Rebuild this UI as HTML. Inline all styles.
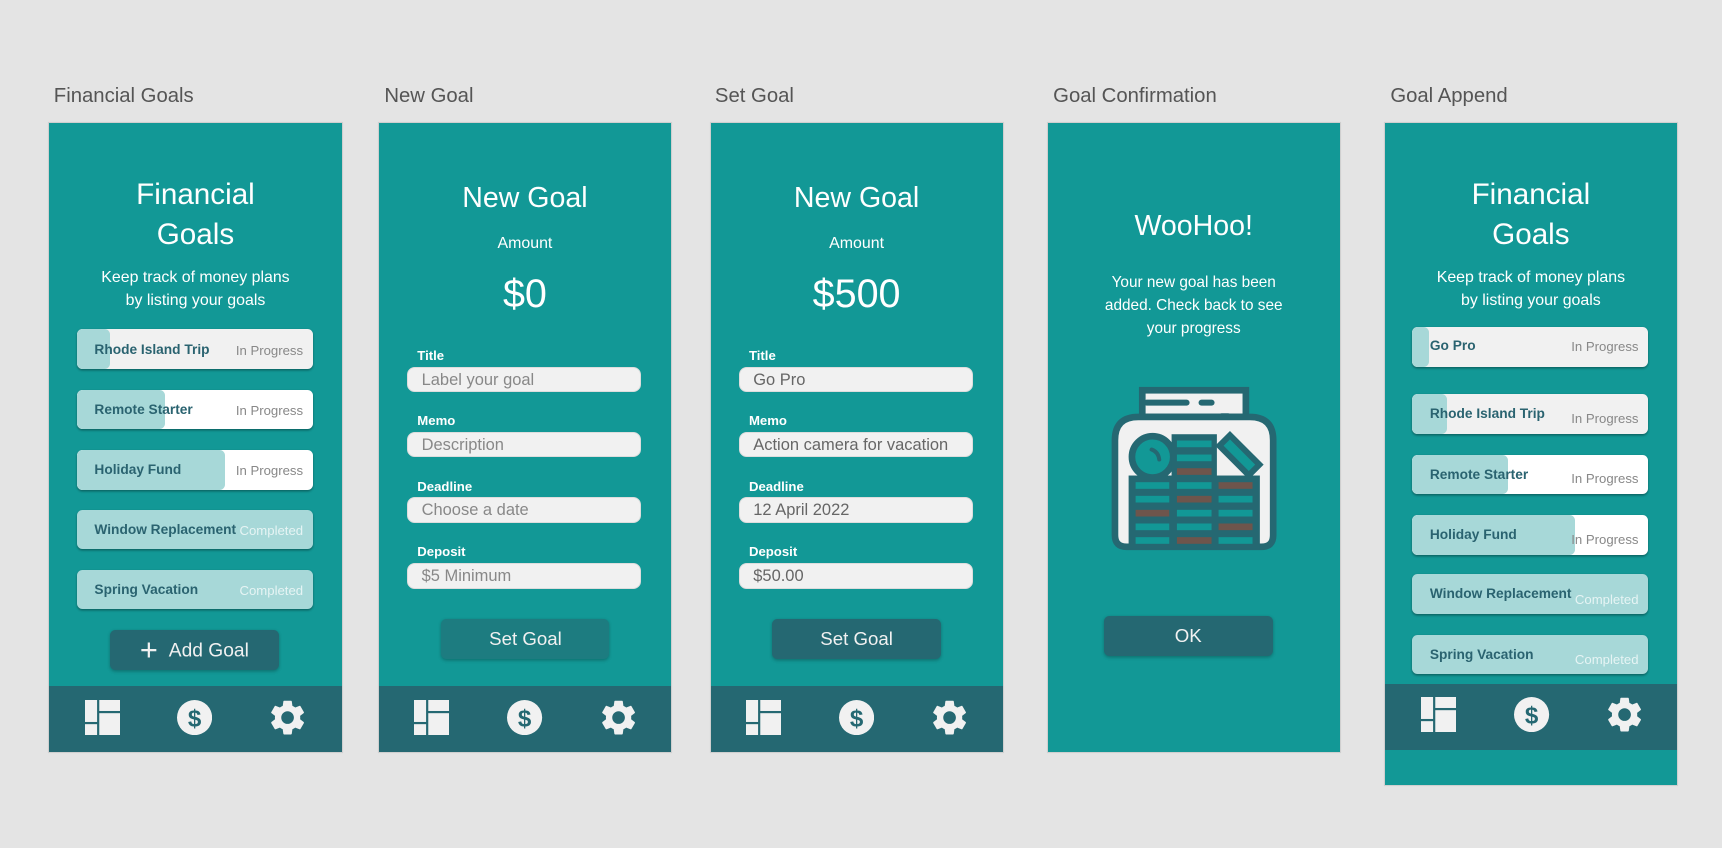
<!DOCTYPE html>
<html><head><meta charset="utf-8">
<style>
html,body{margin:0;padding:0;background:#e4e4e4;width:1722px;height:848px;overflow:hidden;font-family:"Liberation Sans",sans-serif}
#w{position:absolute;left:0;top:0;width:1568px;height:772px;zoom:1.0982}
.lbl{position:absolute;top:77px;font-size:18.5px;color:#555}
.p{position:absolute;top:112px;width:266px;height:573px;background:#129896;box-shadow:0 0 0 1px #cfcfcf;overflow:hidden}
.t{position:absolute;left:0;right:0;text-align:center;color:#fff}
.nav{position:absolute;left:0;right:0;bottom:0;height:60px;background:#256872}
.nav svg{position:absolute;top:12px;width:32px;height:32px}
.card{position:absolute;left:25px;width:215px;height:36px;border-radius:5px;background:#f1f1f1;overflow:hidden;box-shadow:0 1px 2px rgba(0,0,0,.35)}
.card .bar{position:absolute;left:0;top:0;bottom:0;background:#a7d8d8;border-radius:5px}
.card .n{position:absolute;left:16px;top:11px;font-size:12.5px;font-weight:bold;color:#2a6370}
.card .s{position:absolute;right:9px;top:12px;font-size:12px;color:#888}
.card.c .s{color:#e6f4f4}
.fl{position:absolute;left:35px;font-size:12px;font-weight:bold;color:#fff}
.in{position:absolute;left:26px;width:213px;height:23px;border-radius:7px;background:#f1f1f1;border:1px solid #ddd;font-size:15px;color:#888;line-height:22px;padding-left:12px;box-sizing:border-box}
.in.v{color:#666}
.btn{position:absolute;height:36px;border-radius:5px;color:#f1f1f1;text-align:center;font-size:17px;line-height:36px;box-shadow:0 1px 3px rgba(0,0,0,.25)}
</style></head><body><div id="w">

<div class="lbl" style="left:49px">Financial Goals</div>
<div class="lbl" style="left:350px">New Goal</div>
<div class="lbl" style="left:651px">Set Goal</div>
<div class="lbl" style="left:959px">Goal Confirmation</div>
<div class="lbl" style="left:1266px">Goal Append</div>

<svg width="0" height="0" style="position:absolute">
<defs>
<g id="dash"><rect x="0" y="0" width="11" height="20" fill="#f1f1f1"/><rect x="0" y="22" width="11" height="10" fill="#f1f1f1"/><rect x="13" y="0" width="19" height="10" fill="#f1f1f1"/><rect x="13" y="12" width="19" height="20" fill="#f1f1f1"/></g>
<g id="dol"><circle cx="16" cy="16" r="16" fill="#f1f1f1"/><text x="16" y="24" text-anchor="middle" font-family="Liberation Sans" font-weight="bold" font-size="22" fill="#256872">$</text></g>
<g id="gear"><path transform="translate(-3.2 -3.2) scale(1.6)" fill="#f1f1f1" fill-rule="evenodd" d="M19.14 12.94c.04-.3.06-.61.06-.94 0-.32-.02-.64-.07-.94l2.030-1.58a.49.49 0 00.12-.61l-1.92-3.32a.488.488 0 00-.59-.22l-2.39.96c-.5-.38-1.03-.7-1.62-.94l-.36-2.54a.484.484 0 00-.48-.41h-3.84c-.24 0-.43.17-.47.41l-.36 2.54c-.59.24-1.13.57-1.62.94l-2.39-.96c-.22-.08-.47 0-.59.22L2.74 8.87c-.12.21-.08.47.12.61l2.03 1.58c-.05.3-.09.63-.09.94s.02.64.07.94l-2.03 1.58a.49.49 0 00-.12.61l1.92 3.32c.12.22.37.29.59.22l2.39-.96c.5.38 1.03.7 1.62.94l.36 2.54c.05.24.24.41.48.41h3.84c.24 0 .44-.17.47-.41l.36-2.54c.59-.24 1.13-.56 1.62-.94l2.39.96c.22.08.47 0 .59-.22l1.92-3.32c.12-.22.07-.47-.12-.61l-2.01-1.58zM12 15.6c-1.98 0-3.6-1.62-3.6-3.6s1.62-3.6 3.6-3.6 3.6 1.62 3.6 3.6-1.62 3.6-3.6 3.6z"/></g>
</defs></svg>

<!-- Panel 1 -->
<div class="p" style="left:45px">
 <div class="t" style="top:47px;font-size:27px;line-height:37px">Financial<br>Goals</div>
 <div class="t" style="top:130px;font-size:14.5px;line-height:21px">Keep track of money plans<br>by listing your goals</div>
 <div class="card" style="top:188px"><div class="bar" style="width:30px"></div><div class="n">Rhode Island Trip</div><div class="s">In Progress</div></div>
 <div class="card" style="top:243px;background:#fff"><div class="bar" style="width:80px"></div><div class="n">Remote Starter</div><div class="s">In Progress</div></div>
 <div class="card" style="top:298px;background:#fff"><div class="bar" style="width:135px"></div><div class="n">Holiday Fund</div><div class="s">In Progress</div></div>
 <div class="card c" style="top:352px;background:#a7d8d8"><div class="n">Window Replacement</div><div class="s">Completed</div></div>
 <div class="card c" style="top:407px;background:#a7d8d8"><div class="n">Spring Vacation</div><div class="s">Completed</div></div>
 <div class="btn" style="left:55px;top:462px;width:154px;background:#256872;font-size:17.5px"><span style="font-size:28px;font-weight:300;vertical-align:-3px;margin-right:10px">+</span>Add Goal</div>
 <div class="nav"><svg style="left:32px" viewBox="0 0 32 32"><use href="#dash"/></svg><svg style="left:116px" viewBox="0 0 32 32"><use href="#dol"/></svg><svg style="left:201px" viewBox="0 0 32 32"><use href="#gear"/></svg></div>
</div>

<!-- Panel 2 -->
<div class="p" style="left:345px">
 <div class="t" style="top:54px;font-size:26px">New Goal</div>
 <div class="t" style="top:102px;font-size:14.5px">Amount</div>
 <div class="t" style="top:136px;font-size:36px">$0</div>
 <div class="fl" style="top:205px">Title</div><div class="in" style="top:222px">Label your goal</div>
 <div class="fl" style="top:264px">Memo</div><div class="in" style="top:281px">Description</div>
 <div class="fl" style="top:324px">Deadline</div><div class="in" style="top:341px">Choose a date</div>
 <div class="fl" style="top:383px">Deposit</div><div class="in" style="top:401px">$5 Minimum</div>
 <div class="btn" style="left:57px;top:452px;width:153px;background:#1d7c80">Set Goal</div>
 <div class="nav"><svg style="left:32px" viewBox="0 0 32 32"><use href="#dash"/></svg><svg style="left:117px" viewBox="0 0 32 32"><use href="#dol"/></svg><svg style="left:202px" viewBox="0 0 32 32"><use href="#gear"/></svg></div>
</div>

<!-- Panel 3 -->
<div class="p" style="left:647px">
 <div class="t" style="top:54px;font-size:26px">New Goal</div>
 <div class="t" style="top:102px;font-size:14.5px">Amount</div>
 <div class="t" style="top:136px;font-size:36px">$500</div>
 <div class="fl" style="top:205px">Title</div><div class="in v" style="top:222px">Go Pro</div>
 <div class="fl" style="top:264px">Memo</div><div class="in v" style="top:281px">Action camera for vacation</div>
 <div class="fl" style="top:324px">Deadline</div><div class="in v" style="top:341px">12 April 2022</div>
 <div class="fl" style="top:383px">Deposit</div><div class="in v" style="top:401px">$50.00</div>
 <div class="btn" style="left:56px;top:452px;width:154px;background:#256872">Set Goal</div>
 <div class="nav"><svg style="left:32px" viewBox="0 0 32 32"><use href="#dash"/></svg><svg style="left:117px" viewBox="0 0 32 32"><use href="#dol"/></svg><svg style="left:202px" viewBox="0 0 32 32"><use href="#gear"/></svg></div>
</div>

<!-- Panel 4 -->
<div class="p" style="left:954px">
 <div class="t" style="top:79px;font-size:26px">WooHoo!</div>
 <div class="t" style="top:135px;font-size:14px;line-height:21px">Your new goal has been<br>added. Check back to see<br>your progress</div>
 <svg style="position:absolute;left:2px;top:216px;width:273px;height:228px" viewBox="0 0 900 750">
  <rect x="277" y="90" width="311" height="80" fill="#f1f1f1" stroke="#256872" stroke-width="20"/>
  <path d="M265 170 H600 Q670 170 670 240 V525 Q670 560 635 560 H230 Q195 560 195 525 V240 Q195 170 265 170 Z" fill="#f1f1f1" stroke="#256872" stroke-width="20"/>
  <g stroke="#256872" stroke-width="18" stroke-linecap="round"><line x1="290" y1="127" x2="410" y2="127"/><line x1="455" y1="127" x2="485" y2="127"/><line x1="515" y1="168" x2="535" y2="168"/></g>
  <circle cx="308" cy="290" r="62" fill="#129896" stroke="#256872" stroke-width="20"/>
  <path d="M305 268 Q325 275 328 298" stroke="#256872" stroke-width="12" fill="none" stroke-linecap="round"/>
  <g transform="rotate(45 565 285)"><rect x="505" y="260" width="125" height="45" fill="#129896" stroke="#256872" stroke-width="18"/></g>
  <rect x="365" y="222" width="136" height="135" fill="#256872"/>
  <rect x="381" y="241" width="104" height="20" fill="#129896"/>
  <rect x="381" y="283" width="104" height="20" fill="#129896"/>
  <rect x="381" y="324" width="104" height="20" fill="#6e554c"/>
  <rect x="236" y="346" width="394" height="218" fill="#256872"/>
  <g>
   <rect x="257" y="366" width="101" height="20" fill="#129896"/><rect x="381" y="366" width="104" height="20" fill="#129896"/><rect x="506" y="366" width="102" height="20" fill="#6e554c"/>
   <rect x="257" y="407" width="101" height="20" fill="#129896"/><rect x="381" y="407" width="104" height="20" fill="#6e554c"/><rect x="506" y="407" width="102" height="20" fill="#129896"/>
   <rect x="257" y="449" width="101" height="20" fill="#6e554c"/><rect x="381" y="449" width="104" height="20" fill="#129896"/><rect x="506" y="449" width="102" height="20" fill="#129896"/>
   <rect x="257" y="490" width="101" height="20" fill="#129896"/><rect x="381" y="490" width="104" height="20" fill="#129896"/><rect x="506" y="490" width="102" height="20" fill="#6e554c"/>
   <rect x="257" y="531" width="101" height="20" fill="#129896"/><rect x="381" y="531" width="104" height="20" fill="#6e554c"/><rect x="506" y="531" width="102" height="20" fill="#129896"/>
  </g>
 </svg>
 <div class="btn" style="left:51px;top:449px;width:154px;background:#256872">OK</div>
</div>

<!-- Panel 5 -->
<div class="p" style="left:1261px;height:603px">
 <div class="t" style="top:47px;font-size:27px;line-height:37px">Financial<br>Goals</div>
 <div class="t" style="top:130px;font-size:14.5px;line-height:21px">Keep track of money plans<br>by listing your goals</div>
 <div class="card" style="top:186px"><div class="bar" style="width:15px"></div><div class="n" style="top:10px">Go Pro</div><div class="s" style="top:11px">In Progress</div></div>
 <div class="card" style="top:247px"><div class="bar" style="width:32px"></div><div class="n">Rhode Island Trip</div><div class="s" style="top:15px">In Progress</div></div>
 <div class="card" style="top:302px;background:#fff"><div class="bar" style="width:87px"></div><div class="n">Remote Starter</div><div class="s" style="top:15px">In Progress</div></div>
 <div class="card" style="top:357px;background:#fff"><div class="bar" style="width:148px"></div><div class="n">Holiday Fund</div><div class="s" style="top:15px">In Progress</div></div>
 <div class="card c" style="top:411px;background:#a7d8d8"><div class="n">Window Replacement</div><div class="s" style="top:16px">Completed</div></div>
 <div class="card c" style="top:466px;background:#a7d8d8"><div class="n">Spring Vacation</div><div class="s" style="top:16px">Completed</div></div>
 <div class="nav" style="bottom:32px"><svg style="left:33px" viewBox="0 0 32 32"><use href="#dash"/></svg><svg style="left:118px" viewBox="0 0 32 32"><use href="#dol"/></svg><svg style="left:202px" viewBox="0 0 32 32"><use href="#gear"/></svg></div>
</div>

</div></body></html>
